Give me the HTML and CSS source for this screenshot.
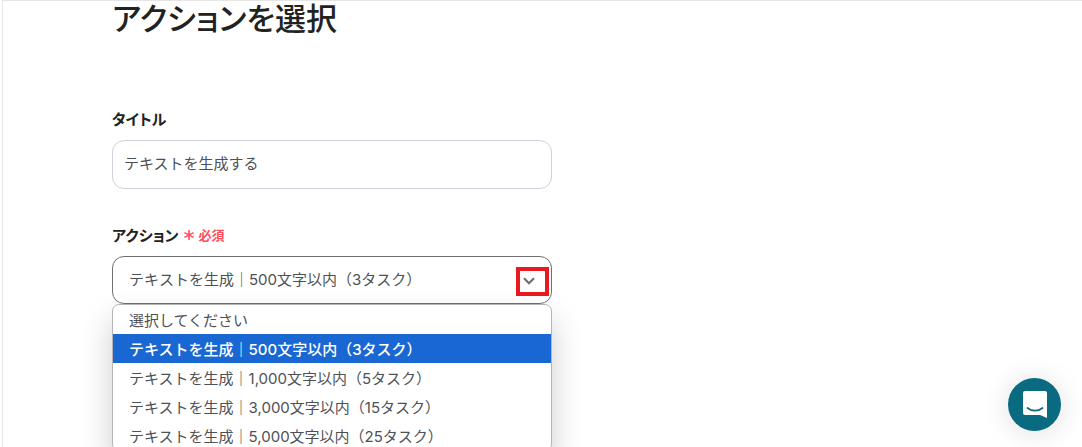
FILE: index.html
```html
<!DOCTYPE html>
<html lang="ja">
<head>
    <meta charset="UTF-8">
    <meta name="viewport" content="width=device-width, initial-scale=1.0">
    <title>アクションを選択</title>
    <link rel="stylesheet" href="styles.css">
</head>
<body>
    <main class="page">
        <h1>アクションを選択</h1>
        <form class="form">
            <div class="field">
                <label for="title">タイトル</label>
                <input type="text" id="title" value="テキストを生成する">
            </div>
            <div class="field">
                <label for="action">アクション<span class="required"><svg width="12" height="12" viewBox="0 0 12 12" aria-hidden="true"><path d="M6 1v10M1.400 3.600l9.200 4.800M10.600 3.600L1.400 8.400" fill="none" stroke="currentColor" stroke-width="1.600"/></svg>必須</span></label>
                <div class="select-wrap">
                    <select id="action">
                        <option>選択してください</option>
                        <option selected>テキストを生成｜500文字以内（3タスク）</option>
                        <option>テキストを生成｜1,000文字以内（5タスク）</option>
                        <option>テキストを生成｜3,000文字以内（15タスク）</option>
                        <option>テキストを生成｜5,000文字以内（25タスク）</option>
                    </select>
                    <svg class="chevron" width="12" height="8" viewBox="0 0 12 8" aria-hidden="true"><path d="M1 1.200l5 5 5-5" fill="none" stroke="currentColor" stroke-width="2.200"/></svg>
                    <span class="highlight"></span>
                    <ul class="menu">
                        <li>選択してください</li>
                        <li class="selected">テキストを生成｜500文字以内（3タスク）</li>
                        <li>テキストを生成｜1,000文字以内（5タスク）</li>
                        <li>テキストを生成｜3,000文字以内（15タスク）</li>
                        <li>テキストを生成｜5,000文字以内（25タスク）</li>
                    </ul>
                </div>
            </div>
            <button type="button" class="next" aria-label="次へ"></button>
        </form>
    </main>
    <button type="button" class="chat" aria-label="チャット">
        <svg width="24" height="27" viewBox="0 0 24 27" aria-hidden="true">
            <path d="M2 0h20a2 2 0 0 1 2 2v25l-7-3H2a2 2 0 0 1-2-2V2a2 2 0 0 1 2-2z" fill="#fff"/>
            <path d="M4.500 17c4.500 3.600 10.500 3.600 15 0" fill="none" stroke="#0a6a80" stroke-width="1.700" stroke-linecap="round"/>
        </svg>
    </button>
</body>
</html>
```
FILE: styles.css
```css
* {
    box-sizing: border-box;
}
body {
    margin: 0;
    padding-left: 2px;
    background: #fff;
    color: #222;
    font-family: Inter, "Noto Sans CJK JP", sans-serif;
    font-size: 15px;
}
.page {
    height: 100vh;
    padding: 0 20px 0 109px;
    border-top: 1px solid #e5e5e5;
    border-left: 1px solid #e5e5e5;
    overflow: hidden;
}
h1 {
    margin: 0 0 71px;
    font-size: 31px;
    line-height: 36px;
    font-weight: 500;
    font-feature-settings: "palt";
}
.form {
    max-width: 440px;
}
.field {
    margin-bottom: 35px;
}
label {
    display: flex;
    align-items: center;
    height: 20px;
    margin-bottom: 12px;
    font-weight: 600;
    font-feature-settings: "palt";
}
.required {
    display: flex;
    align-items: center;
    gap: 3px;
    margin-left: 5px;
    color: #ff4f5e;
    font-size: 13px;
}
.required svg {
    margin-top: 2px;
}
input, select {
    display: block;
    width: 100%;
    height: 49px;
    border: 1px solid #d0d2dc;
    border-radius: 12px;
    background: #fff;
    color: #4d5156;
    font: inherit;
    outline: none;
}
input {
    padding: 0 11px 4px;
}
select {
    height: 48px;
    padding: 0 40px 2px 16px;
    border-color: #707070;
    font-kerning: none;
    appearance: none;
}
.select-wrap {
    position: relative;
}
.chevron {
    position: absolute;
    right: 17px;
    top: 21px;
    color: #707070;
}
.highlight {
    position: absolute;
    right: 3px;
    top: 11px;
    width: 33px;
    height: 29px;
    border: 4px solid #e71b1f;
}
.menu {
    position: absolute;
    top: 48px;
    left: 0;
    width: 100%;
    margin: 0;
    padding: 0;
    border: 1px solid #b5b5b5;
    border-radius: 7px;
    background: #fff;
    box-shadow: 0 16px 32px rgba(0, 0, 0, 0.2);
    color: #4d5156;
    list-style: none;
    z-index: 1;
}
.menu li {
    height: 29px;
    padding-left: 16px;
    line-height: 32px;
    white-space: nowrap;
}
.menu .selected {
    background: #1967d2;
    color: #fff;
    font-weight: 500;
}
.next {
    display: block;
    width: 120px;
    height: 34px;
    margin-top: 78px;
    border: 0;
    background: #0a6a80;
}
.chat {
    position: fixed;
    right: 21px;
    bottom: 16px;
    display: flex;
    align-items: center;
    justify-content: center;
    width: 53px;
    height: 53px;
    padding: 0;
    border: 0;
    border-radius: 50%;
    background: #0a6a80;
    box-shadow: 0 2px 28px rgba(0, 0, 0, 0.13);
}
```
